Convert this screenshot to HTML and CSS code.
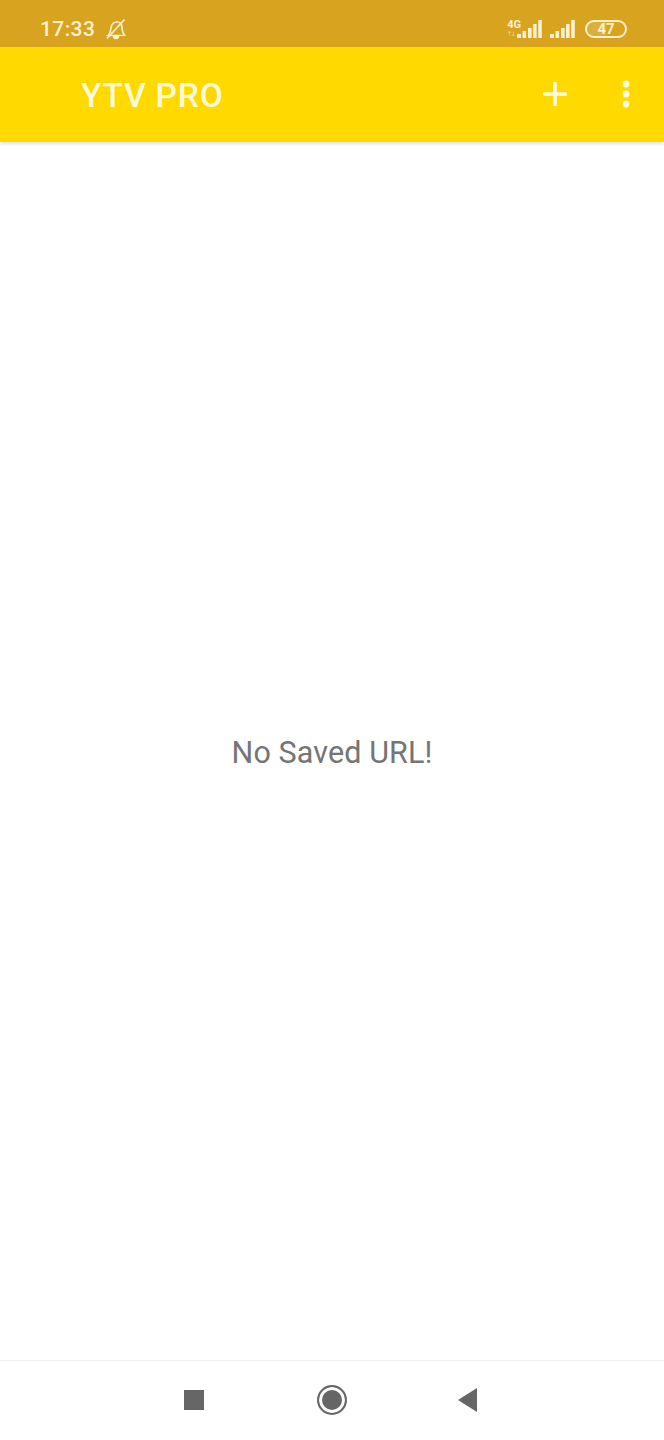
FILE: index.html
```html
<!DOCTYPE html>
<html lang="en">
<head>
    <meta charset="UTF-8">
    <meta name="viewport" content="width=device-width, initial-scale=1.0">
    <title>YTV PRO</title>
    <link rel="stylesheet" href="styles.css">
</head>
<body>
    <div class="phone">
        <div class="status_bar">
            <div class="status_left">
                <span class="clock">17:33</span>
                <svg class="bell" width="22" height="22" viewBox="0 0 22 22" fill="none" stroke="#fbf0cf" stroke-width="1.6">
                    <path d="M3 17.5 C5.5 15.5 5.5 13 6 10 C6.6 6 9 4 12 4 C15 4 16.8 6.2 17 9.5 C17.2 12.5 17.6 15 19.5 17.2 L3 17.5 Z"/>
                    <path d="M8.5 18 C9 21.4 13 21.4 13.5 18 Z" fill="#fbf0cf"/>
                    <path d="M2 20.5 L19.5 1.5"/>
                </svg>
            </div>
            <div class="status_right">
                <div class="sim">
                    <div class="net_label"><span class="net_4g">4G</span><span class="net_arrows">↑↓</span></div>
                    <svg width="25" height="18" viewBox="0 0 25 18" fill="#fbf0cf">
                        <rect x="0" y="14" width="4" height="4"/>
                        <rect x="5.5" y="11" width="3.6" height="7"/>
                        <rect x="11" y="8" width="3.6" height="10"/>
                        <rect x="16" y="4" width="3.6" height="14"/>
                        <rect x="21.2" y="0" width="3.6" height="18"/>
                    </svg>
                </div>
                <svg width="25" height="18" viewBox="0 0 25 18" fill="#fbf0cf">
                    <rect x="0" y="14" width="4" height="4"/>
                    <rect x="5.5" y="11" width="3.6" height="7"/>
                    <rect x="11" y="8" width="3.6" height="10"/>
                    <rect x="16" y="4" width="3.6" height="14"/>
                    <rect x="21.2" y="0" width="3.6" height="18"/>
                </svg>
                <div class="battery"><span class="battery_level"></span><span class="battery_text">47</span></div>
            </div>
        </div>

        <div class="toolbar">
            <p class="app_title">YTV PRO</p>
            <div class="toolbar_icons">
                <svg width="24" height="24" viewBox="0 0 24 24" fill="#fffbe0">
                    <rect x="0" y="10.2" width="24" height="3.6" rx="1"/>
                    <rect x="10.2" y="0" width="3.6" height="24" rx="1"/>
                </svg>
                <svg width="8" height="28" viewBox="0 0 8 28" fill="#fffbe0">
                    <circle cx="4" cy="4" r="3.4"/>
                    <circle cx="4" cy="14" r="3.4"/>
                    <circle cx="4" cy="24" r="3.4"/>
                </svg>
            </div>
        </div>

        <div class="content">
            <p class="empty_text">No Saved URL!</p>
        </div>

        <div class="nav_bar">
            <span class="nav_square"></span>
            <span class="nav_circle"></span>
            <span class="nav_back"></span>
        </div>
    </div>
</body>
</html>
```

FILE: styles.css
```css
*{
    padding: 0;
    margin: 0;
    box-sizing: border-box;
}

body{
    background: #fff;
    font-family: Roboto, "Liberation Sans", sans-serif;
}

.phone{
    width: 664px;
    height: 1440px;
    display: flex;
    flex-direction: column;
}

.status_bar{
    height: 47px;
    background: #d8a420;
    color: #fbf0cf;
    display: flex;
    align-items: center;
    justify-content: space-between;
    padding: 10px 37px 0 40px;
}

.status_left{
    display: flex;
    align-items: center;
    gap: 10px;
}

.clock{
    font-size: 21px;
    font-weight: 500;
    letter-spacing: 0.4px;
}

.status_right{
    display: flex;
    align-items: center;
    gap: 8px;
}

.sim{
    display: flex;
    align-items: flex-end;
}

.net_label{
    display: flex;
    flex-direction: column;
    margin-right: -4px;
    font-size: 11px;
    line-height: 10px;
    font-weight: 700;
}

.net_arrows{
    font-size: 8px;
    line-height: 8px;
    font-weight: 400;
}

.battery{
    position: relative;
    width: 42px;
    height: 18px;
    margin-left: 2px;
    border: 2px solid #fbf0cf;
    border-radius: 9px;
    overflow: hidden;
    display: flex;
    align-items: center;
    justify-content: center;
}

.battery_level{
    position: absolute;
    left: 0;
    top: 0;
    bottom: 0;
    width: 50%;
    background: rgba(255, 255, 255, 0.12);
}

.battery_text{
    position: relative;
    font-size: 15px;
    font-weight: 700;
}

.toolbar{
    height: 95px;
    background: #ffd900;
    display: flex;
    align-items: center;
    justify-content: space-between;
    padding: 0 34px 0 81px;
    box-shadow: 0 2px 3px rgba(0, 0, 0, 0.12);
}

.app_title{
    font-size: 33.5px;
    font-weight: 500;
    color: #fff9d6;
    letter-spacing: 0.8px;
    padding-top: 2px;
}

.toolbar_icons{
    display: flex;
    align-items: center;
    gap: 55px;
    margin-bottom: 1px;
}

.content{
    flex: 1;
    display: flex;
    align-items: center;
    justify-content: center;
    padding-top: 3px;
}

.empty_text{
    font-size: 30.5px;
    letter-spacing: 0.1px;
    color: #757575;
}

.nav_bar{
    height: 80px;
    border-top: 1px solid #eeeeee;
    display: flex;
    align-items: center;
    justify-content: center;
    gap: 113px;
    padding: 0 3px 2px 0;
}

.nav_square{
    width: 20px;
    height: 20px;
    background: #666;
}

.nav_circle{
    width: 30px;
    height: 30px;
    border-radius: 50%;
    background: #666;
    border: 2px solid #666;
    box-shadow: inset 0 0 0 3px #fff;
}

.nav_back{
    width: 0;
    height: 0;
    margin-left: -2px;
    border-top: 12px solid transparent;
    border-bottom: 12px solid transparent;
    border-right: 19px solid #666;
}
```
